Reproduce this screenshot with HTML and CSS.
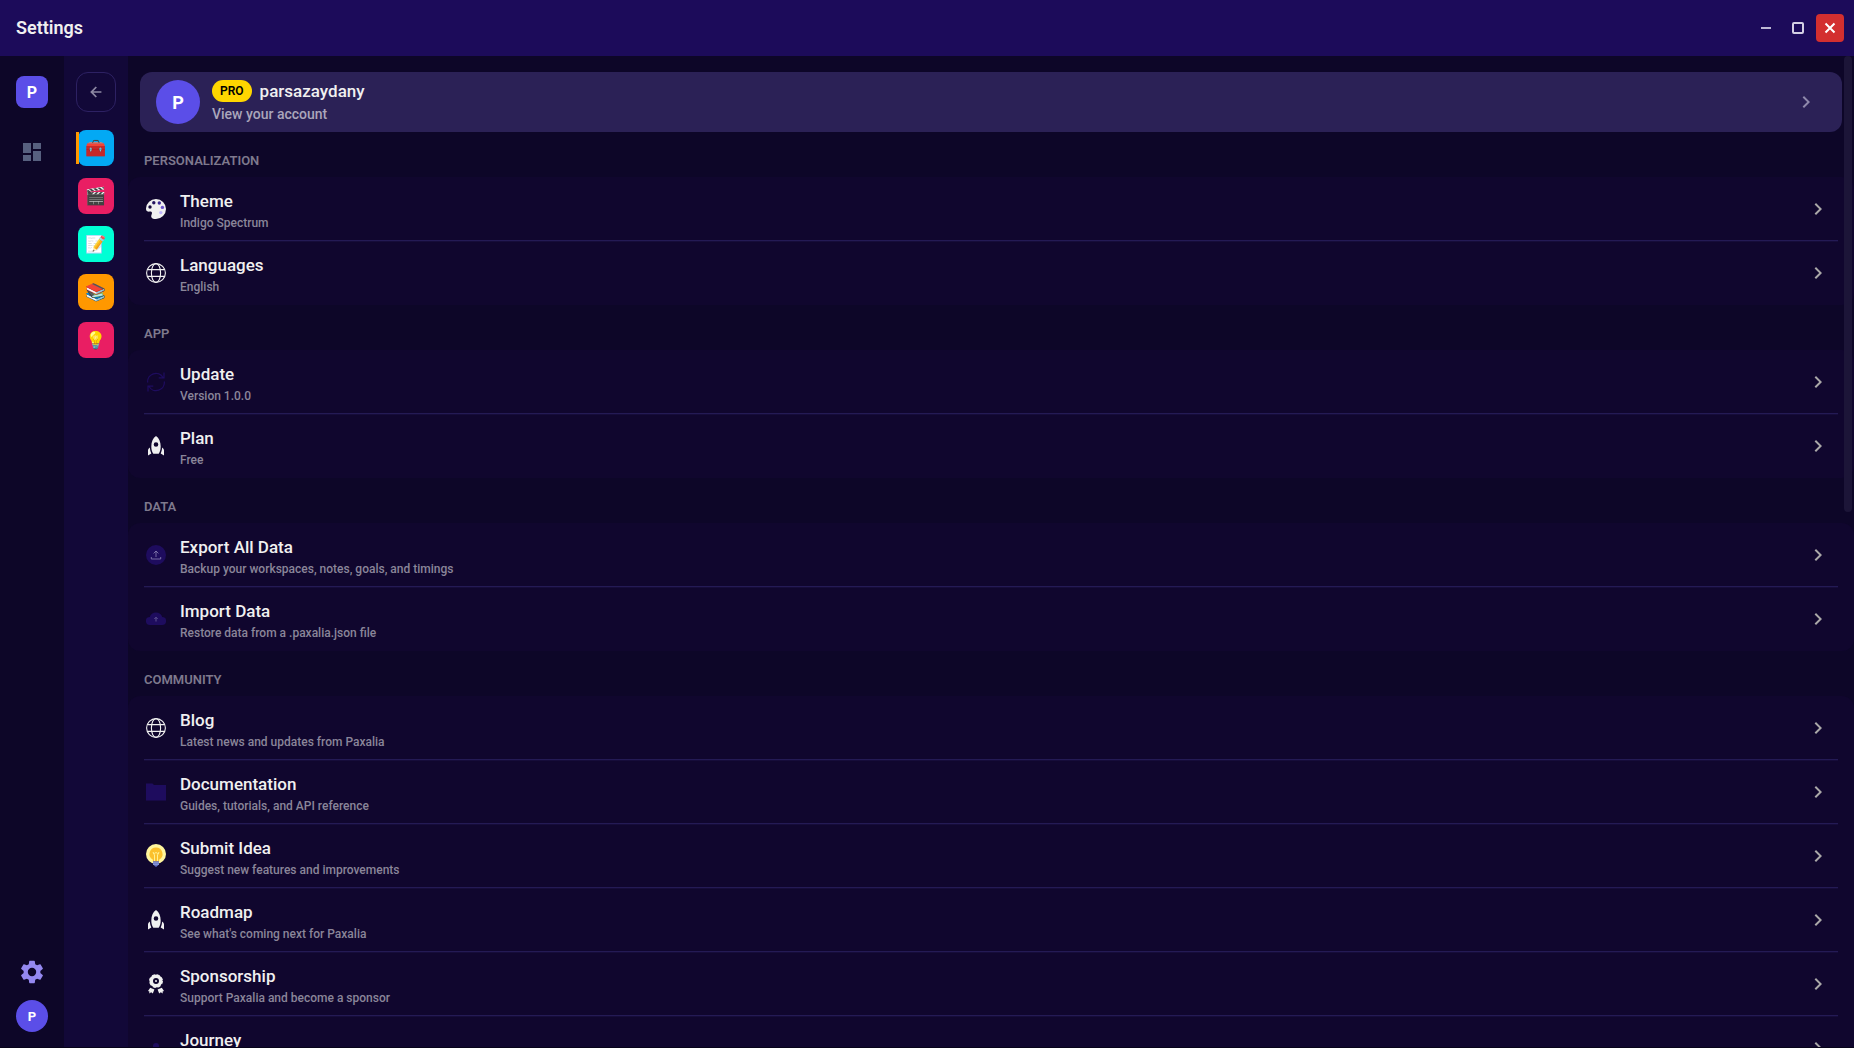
FILE: index.html
```html
<!DOCTYPE html>
<html lang="en">
<head>
<meta charset="UTF-8">
<meta name="viewport" content="width=device-width, initial-scale=1">
<title>Settings</title>
<link rel="stylesheet" href="styles.css">
</head>
<body>
<svg class="sprite" aria-hidden="true">
  <symbol id="chevron" viewBox="0 0 24 24"><path d="M8.6 16.6 13.2 12 8.6 7.4 10 6l6 6-6 6z"/></symbol>
  <symbol id="globe" viewBox="0 0 20 20">
    <g fill="none" stroke="#f0f0f0" stroke-width="1.1">
      <circle cx="10" cy="10" r="9.4"/>
      <ellipse cx="10" cy="10" rx="4.6" ry="9.4"/>
      <path d="M1.2 6.6h17.6M1.2 13.4h17.6"/>
    </g>
  </symbol>
  <symbol id="rocket" viewBox="0 0 20 20">
    <path fill="#f0f0f0" fill-rule="evenodd" d="M10 0C7 2 5.3 6 5.3 10.500c0 3 .7 5.500 2 7.200h5.400c1.300-1.700 2-4.200 2-7.200C14.700 6 13 2 10 0zm0 6.200a2.300 2.300 0 1 1 0 4.600 2.300 2.300 0 0 1 0-4.600z"/>
    <path fill="#f0f0f0" d="M3.800 11.400C2.600 12.200 2 13.200 2 14.600v5l3.300-2c-.8-1.800-1.300-3.900-1.500-6.200zM16.200 11.400c1.200.8 1.800 1.800 1.800 3.200v5l-3.300-2c.8-1.800 1.300-3.900 1.500-6.200z"/>
  </symbol>
</svg>

<header class="titlebar">
  <h1>Settings</h1>
  <div class="window-buttons">
    <button aria-label="Minimize"><svg viewBox="0 0 28 28"><path d="M9 14h10" stroke="#bdb8d4" stroke-width="2"/></svg></button>
    <button aria-label="Maximize"><svg viewBox="0 0 28 28"><rect x="9" y="9" width="10" height="10" rx="1" fill="none" stroke="#d3cfe4" stroke-width="2"/></svg></button>
    <button class="close" aria-label="Close"><svg viewBox="0 0 28 28"><path d="m9.500 9.500 9 9m0-9-9 9" stroke="#fff" stroke-width="2"/></svg></button>
  </div>
</header>

<div class="app">
  <nav class="rail">
    <button class="space">P</button>
    <button class="dashboard" aria-label="Dashboard"><svg viewBox="0 0 24 24"><path d="M3 13h8V3H3zm0 8h8v-6H3zm10 0h8V11h-8zm0-18v6h8V3z"/></svg></button>
    <button class="gear" aria-label="Settings"><svg viewBox="0 0 24 24"><path d="M19.140 12.940c.04-.3.060-.61.060-.94 0-.32-.02-.64-.07-.94l2.030-1.580c.18-.14.23-.41.120-.61l-1.920-3.320c-.12-.22-.37-.29-.59-.22l-2.390.96c-.5-.38-1.030-.7-1.620-.94l-.36-2.540c-.04-.24-.24-.41-.48-.41h-3.840c-.24 0-.43.17-.47.41l-.36 2.540c-.59.24-1.130.57-1.620.94l-2.390-.96c-.22-.08-.47 0-.59.22L2.740 8.870c-.12.21-.08.47.12.61l2.030 1.580c-.05.3-.09.63-.09.94s.02.64.07.94l-2.030 1.580c-.18.14-.23.41-.12.61l1.920 3.320c.12.22.37.29.59.22l2.390-.96c.5.38 1.030.7 1.620.94l.36 2.540c.05.24.24.41.48.41h3.840c.24 0 .44-.17.47-.41l.36-2.540c.59-.24 1.130-.56 1.620-.94l2.390.96c.22.08.47 0 .59-.22l1.920-3.320c.12-.22.07-.47-.12-.61zM12 15.600A3.600 3.600 0 1 1 12 8.400a3.600 3.600 0 0 1 0 7.200z"/></svg></button>
    <button class="me">P</button>
  </nav>

  <nav class="workspaces">
    <button class="back" aria-label="Back"><svg viewBox="0 0 24 24"><path d="M18.500 11H8.800l4.300-4.300L11.600 5.300 5 12l6.600 6.700 1.500-1.400L8.800 13h9.700z"/></svg></button>
    <button class="ws blue active" aria-label="Toolbox">🧰</button>
    <button class="ws pink" aria-label="Movies">🎬</button>
    <button class="ws teal" aria-label="Notes">📝</button>
    <button class="ws orange" aria-label="Books">📚</button>
    <button class="ws pink" aria-label="Ideas">💡</button>
  </nav>

  <main class="content">
    <a class="account" href="#account">
      <span class="avatar">P</span>
      <span class="who">
        <span class="name"><span class="pro">PRO</span>parsazaydany</span>
        <span class="view">View your account</span>
      </span>
      <svg class="chevron"><use href="#chevron"/></svg>
    </a>

    <h2>PERSONALIZATION</h2>
    <section class="group">
      <a class="row" href="#theme">
        <svg class="icon" viewBox="0 0 20 20">
          <path fill="#f0f0f0" d="M10 0a10 10 0 0 1 0 20c-3 0-5-1-4.800-2.800.1-1.500 1.200-2.600.6-4C5.200 11.700 3.500 13 1.800 12.600.4 12.200 0 11 0 9.600A10 10 0 0 1 10 0z"/>
          <circle cx="4" cy="8" r="1.700" fill="#14083a"/><circle cx="7.800" cy="3.800" r="1.700" fill="#24145e"/><circle cx="13.300" cy="4" r="1.700" fill="#3e2a96"/><circle cx="16.400" cy="8.400" r="1.700" fill="#6a55cc"/><circle cx="14.800" cy="13.600" r="1.700" fill="#c0b4ff"/>
        </svg>
        <span class="text"><span class="title">Theme</span><span class="sub">Indigo Spectrum</span></span>
        <svg class="chevron"><use href="#chevron"/></svg>
      </a>
      <a class="row" href="#languages">
        <svg class="icon"><use href="#globe"/></svg>
        <span class="text"><span class="title">Languages</span><span class="sub">English</span></span>
        <svg class="chevron"><use href="#chevron"/></svg>
      </a>
    </section>

    <h2>APP</h2>
    <section class="group">
      <a class="row" href="#update">
        <svg class="icon" viewBox="0 0 20 20"><path fill="none" stroke="#1e0c5e" stroke-width="1.300" d="M1.600 10.500A8.300 8.300 0 0 1 17 5.500M18 .5v5.300h-5.300M18.400 9.500A8.300 8.300 0 0 1 3 14.500M2 19.500v-5.300h5.300"/></svg>
        <span class="text"><span class="title">Update</span><span class="sub">Version 1.0.0</span></span>
        <svg class="chevron"><use href="#chevron"/></svg>
      </a>
      <a class="row" href="#plan">
        <svg class="icon"><use href="#rocket"/></svg>
        <span class="text"><span class="title">Plan</span><span class="sub">Free</span></span>
        <svg class="chevron"><use href="#chevron"/></svg>
      </a>
    </section>

    <h2>DATA</h2>
    <section class="group">
      <a class="row" href="#export">
        <svg class="icon" viewBox="0 0 20 20"><circle cx="10" cy="10" r="10" fill="#1e0c5e"/><path fill="none" stroke="#8d84b5" stroke-width=".8" d="M10 12V6M7.600 8.400 10 6l2.400 2.400M5.300 12v2h9.400v-2"/></svg>
        <span class="text"><span class="title">Export All Data</span><span class="sub">Backup your workspaces, notes, goals, and timings</span></span>
        <svg class="chevron"><use href="#chevron"/></svg>
      </a>
      <a class="row" href="#import">
        <svg class="icon" viewBox="0 0 20 20"><path fill="#1e0c5e" d="M4 16a4 4 0 0 1-.2-8 6.500 6.500 0 0 1 12.400 0A4 4 0 0 1 16 16z"/><path fill="none" stroke="#6d62a0" stroke-width=".8" d="M10 12.500V8.300M8.300 10 10 8.300l1.700 1.700"/></svg>
        <span class="text"><span class="title">Import Data</span><span class="sub">Restore data from a .paxalia.json file</span></span>
        <svg class="chevron"><use href="#chevron"/></svg>
      </a>
    </section>

    <h2>COMMUNITY</h2>
    <section class="group">
      <a class="row" href="#blog">
        <svg class="icon"><use href="#globe"/></svg>
        <span class="text"><span class="title">Blog</span><span class="sub">Latest news and updates from Paxalia</span></span>
        <svg class="chevron"><use href="#chevron"/></svg>
      </a>
      <a class="row" href="#docs">
        <svg class="icon" viewBox="0 0 20 20"><path fill="#1e0c5e" d="M0 1.500h6.500L8 3h12v15.500H0z"/></svg>
        <span class="text"><span class="title">Documentation</span><span class="sub">Guides, tutorials, and API reference</span></span>
        <svg class="chevron"><use href="#chevron"/></svg>
      </a>
      <a class="row" href="#idea">
        <svg class="icon bulb" viewBox="0 0 20 23"><circle cx="10" cy="10" r="10" fill="#fff59d"/><path fill="#fbc02d" d="M10 3.500a6.500 6.500 0 0 1 3.300 12.100l-.3 2.400H7l-.3-2.400A6.500 6.500 0 0 1 10 3.500z"/><path fill="none" stroke="#fff59d" stroke-width=".9" d="M8.500 17V11L7 8.500l1.500.9L10 8.500l1.500.9L13 8.500 11.500 11v6"/><path fill="#5c6bc0" d="M7 17.300h6v3l-1.400 1.500L10 23l-1.600-1.200L7 20.300z"/><path stroke="#9fa8da" stroke-width=".8" d="M7 18.800h6M7 20.300h6"/></svg>
        <span class="text"><span class="title">Submit Idea</span><span class="sub">Suggest new features and improvements</span></span>
        <svg class="chevron"><use href="#chevron"/></svg>
      </a>
      <a class="row" href="#roadmap">
        <svg class="icon"><use href="#rocket"/></svg>
        <span class="text"><span class="title">Roadmap</span><span class="sub">See what's coming next for Paxalia</span></span>
        <svg class="chevron"><use href="#chevron"/></svg>
      </a>
      <a class="row" href="#sponsorship">
        <svg class="icon" viewBox="0 0 20 20"><g fill="#f0f0f0"><circle cx="10" cy="7" r="6.500"/><circle cx="10" cy="7" r="6.300" fill="none" stroke="#f0f0f0" stroke-width="1.200" stroke-dasharray="3 1.950"/><path d="M4.200 13.800 8.400 15.600 6.800 19.600 5.200 18.300 3.200 19.400 3.400 17.400 2 17zM15.800 13.800 11.600 15.600 13.200 19.600 14.800 18.300 16.800 19.400 16.600 17.400 18 17z"/></g><circle cx="10" cy="7" r="3" fill="#10062e"/><circle cx="10" cy="7" r="1" fill="#f0f0f0"/></svg>
        <span class="text"><span class="title">Sponsorship</span><span class="sub">Support Paxalia and become a sponsor</span></span>
        <svg class="chevron"><use href="#chevron"/></svg>
      </a>
      <a class="row" href="#journey">
        <svg class="icon" viewBox="0 0 20 20"><circle cx="10" cy="8" r="3" fill="#1e0c5e"/><path stroke="#1e0c5e" stroke-width="2" d="M10 8v11"/></svg>
        <span class="text"><span class="title">Journey</span><span class="sub"></span></span>
        <svg class="chevron"><use href="#chevron"/></svg>
      </a>
    </section>
    <div class="thumb"></div>
  </main>
</div>
</body>
</html>
```
FILE: styles.css
```css
* {
    box-sizing: border-box;
}
html, body {
    height: 100%;
    margin: 0;
}
body {
    display: flex;
    flex-direction: column;
    overflow: hidden;
    background: #0d0628;
    color: #f0f0f0;
    font-family: Roboto, "Liberation Sans", sans-serif;
    font-weight: 500;
}
button {
    display: flex;
    align-items: center;
    justify-content: center;
    padding: 0;
    border: none;
    background: none;
    color: #fff;
    font-family: inherit;
    cursor: pointer;
}
a {
    color: inherit;
    text-decoration: none;
}
.sprite {
    display: none;
}

/* title bar */
.titlebar {
    display: flex;
    flex: none;
    align-items: center;
    justify-content: space-between;
    height: 56px;
    padding: 0 10px 0 16px;
    background: #1c0b5a;
}
.titlebar h1 {
    margin: 0;
    padding-bottom: 2px;
    font-size: 18px;
    font-weight: 600;
}
.window-buttons {
    display: flex;
    gap: 4px;
}
.window-buttons button {
    width: 28px;
    height: 28px;
    border-radius: 4px;
}
.window-buttons .close {
    background: #d32f2f;
}

.app {
    display: flex;
    flex: 1;
    min-height: 0;
    border-bottom: 1px solid #07031a;
}

/* left rail */
.rail {
    display: flex;
    flex-direction: column;
    align-items: center;
    width: 64px;
    padding: 20px 0 15px;
    background: #0d0628;
}
.space, .me {
    width: 32px;
    height: 32px;
    border-radius: 8px;
    background: #5b4ee8;
    font-size: 16px;
    font-weight: 700;
}
.me {
    border-radius: 50%;
    font-size: 13px;
}
.dashboard {
    width: 24px;
    height: 24px;
    margin-top: 32px;
    fill: #57607f;
}
.gear {
    width: 28px;
    height: 28px;
    margin-top: auto;
    margin-bottom: 14px;
    fill: #9488f0;
}

/* workspace list */
.workspaces {
    display: flex;
    flex-direction: column;
    align-items: center;
    gap: 12px;
    width: 64px;
    padding-top: 16px;
    background: #120838;
}
.back {
    width: 40px;
    height: 40px;
    margin-bottom: 6px;
    border: 1px solid #2d2163;
    border-radius: 12px;
}
.back svg {
    width: 20px;
    height: 20px;
    fill: #8d88a3;
}
.ws {
    position: relative;
    width: 36px;
    height: 36px;
    border-radius: 8px;
    font-family: "Noto Color Emoji", sans-serif;
    font-size: 17px;
}
.blue { background: #03a9f4; }
.pink { background: #e91e63; }
.teal { background: #00ffd5; }
.orange { background: #ff9800; }
.ws.active::before {
    content: "";
    position: absolute;
    left: -2px;
    top: 2px;
    width: 3px;
    height: 32px;
    background: #ff9800;
}

/* settings list */
.content {
    position: relative;
    flex: 1;
    overflow: hidden;
    padding-top: 16px;
}
.account {
    display: flex;
    align-items: center;
    gap: 12px;
    height: 60px;
    margin: 0 12px;
    padding: 0 24px 0 16px;
    border-radius: 12px;
    background: #2b2156;
}
.avatar {
    display: flex;
    align-items: center;
    justify-content: center;
    width: 44px;
    height: 44px;
    border-radius: 50%;
    background: #5b4ee8;
    color: #fff;
    font-size: 18px;
    font-weight: 700;
}
.who {
    display: flex;
    flex: 1;
    flex-direction: column;
    gap: 1px;
    padding-top: 1px;
}
.name {
    display: flex;
    align-items: center;
    gap: 8px;
    font-size: 17px;
    font-weight: 500;
    line-height: 22px;
}
.pro {
    padding: 0 8px;
    border-radius: 12px;
    background: #ffd600;
    color: #000;
    font-size: 12px;
    font-weight: 600;
}
.view {
    color: #aaa6bb;
    font-size: 14px;
    line-height: 22px;
}
h2 {
    margin: 0;
    padding: 20px 16px 7px;
    color: #7e798d;
    font-size: 13px;
    font-weight: 600;
    line-height: 18px;
}
.group {
    padding: 0 16px;
    border-radius: 12px;
    background: #10062e;
}
.row {
    display: flex;
    align-items: center;
    gap: 14px;
    height: 64px;
    padding-right: 8px;
    border-bottom: 1px solid #241a55;
    box-shadow: 0 1px #160c3a;
}
.row:last-child {
    border-bottom-color: transparent;
    box-shadow: none;
}
.icon {
    width: 20px;
    height: 20px;
    margin-left: 2px;
}
.bulb {
    height: 23px;
}
.text {
    display: flex;
    flex: 1;
    flex-direction: column;
    gap: 2px;
    padding-top: 2px;
}
.title {
    font-size: 17px;
    line-height: 24px;
}
.sub {
    min-height: 16px;
    color: #8a8599;
    font-size: 12px;
    line-height: 16px;
}
.chevron {
    width: 24px;
    height: 24px;
    fill: #aaa8a8;
}
.account .chevron {
    fill: #8f89ab;
}
.thumb {
    position: absolute;
    top: 0;
    right: 2px;
    width: 8px;
    height: 46%;
    border-radius: 4px;
    background: #1c1538;
}
```
